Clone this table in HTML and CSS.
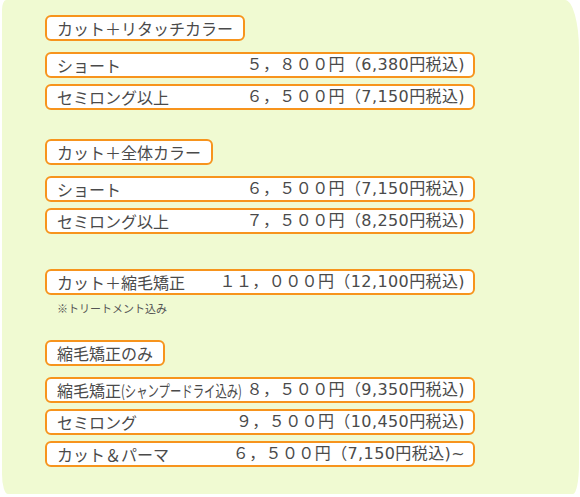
FILE: index.html
```html
<!DOCTYPE html>
<html lang="ja">
<head>
<meta charset="utf-8">
<title>料金表</title>
<link rel="stylesheet" href="styles.css">
</head>
<body>
<div class="panel">
  <section class="group">
    <div class="tag">カット＋リタッチカラー</div>
    <ul class="list">
      <li class="row"><span class="name">ショート</span><span class="price">５，８００円（6,380円税込)</span></li>
      <li class="row"><span class="name">セミロング以上</span><span class="price">６，５００円（7,150円税込)</span></li>
    </ul>
  </section>
  <section class="group">
    <div class="tag">カット＋全体カラー</div>
    <ul class="list">
      <li class="row"><span class="name">ショート</span><span class="price">６，５００円（7,150円税込)</span></li>
      <li class="row"><span class="name">セミロング以上</span><span class="price">７，５００円（8,250円税込)</span></li>
    </ul>
  </section>
  <section class="group group-single">
    <ul class="list">
      <li class="row"><span class="name">カット＋縮毛矯正</span><span class="price">１１，０００円（12,100円税込)</span></li>
    </ul>
    <p class="note">※トリートメント込み</p>
  </section>
  <section class="group group-after-note">
    <div class="tag">縮毛矯正のみ</div>
    <ul class="list">
      <li class="row"><span class="name">縮毛矯正<span class="squeeze">(シャンプードライ込み)</span></span><span class="price">８，５００円（9,350円税込)</span></li>
      <li class="row"><span class="name">セミロング</span><span class="price">９，５００円（10,450円税込)</span></li>
      <li class="row"><span class="name">カット＆パーマ</span><span class="price">６，５００円（7,150円税込)~</span></li>
    </ul>
  </section>
</div>
</body>
</html>
```
FILE: styles.css
```css
html, body {
  margin: 0;
  padding: 0;
  background: #ffffff;
}

body {
  font-family: "Noto Sans CJK JP", "Noto Sans", sans-serif;
  color: #4a4a4a;
}

.panel {
  box-sizing: border-box;
  width: 577px;
  height: 494px;
  margin-left: 2px;
  padding: 15px 0 0 43px;
  background: #f0fad2;
  border-radius: 4px 14px 6px 6px / 10px 50px 30px 20px;
}

.group {
  margin-top: 29px;
}

.group:first-child {
  margin-top: 0;
}

.group-single {
  margin-top: 35px;
}

.group-after-note {
  margin-top: 25px;
}

.tag {
  display: inline-block;
  height: 22px;
  line-height: 22px;
  padding: 0 10px;
  font-size: 16px;
  background: #ffffff;
  border: 2px solid #f7941d;
  border-radius: 6px;
  white-space: nowrap;
}

.list {
  list-style: none;
  margin: 11px 0 0;
  padding: 0;
  display: flex;
  flex-direction: column;
  gap: 6px;
}

.group-single .list {
  margin-top: 0;
}

.row {
  box-sizing: border-box;
  width: 430px;
  height: 26px;
  display: flex;
  justify-content: space-between;
  align-items: center;
  padding: 0 8px 0 10px;
  font-size: 16px;
  line-height: 22px;
  background: #ffffff;
  border: 2px solid #f7941d;
  border-radius: 6px;
  white-space: nowrap;
}

.price {
  font-family: "DejaVu Sans", "Noto Sans CJK JP", sans-serif;
  letter-spacing: 0.4px;
}

.squeeze {
  display: inline-block;
  transform: scaleX(0.71);
  transform-origin: 0 50%;
  margin-right: -50px;
}

.note {
  margin: 6px 0 0 12px;
  font-size: 11px;
  line-height: 14px;
  color: #555555;
}
```
